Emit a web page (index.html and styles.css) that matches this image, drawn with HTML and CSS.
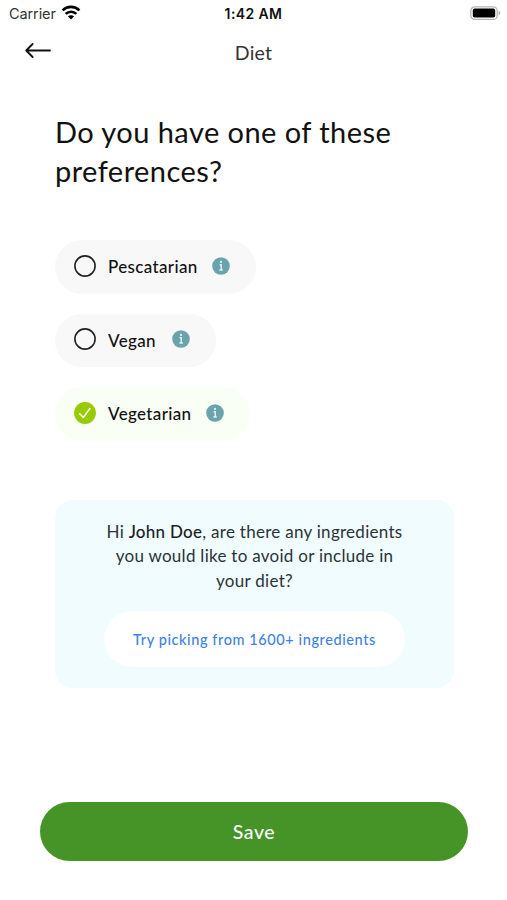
FILE: index.html
```html
<!DOCTYPE html>
<html lang="en">
<head>
<meta charset="utf-8">
<title>Diet</title>
<link rel="stylesheet" href="styles.css">
</head>
<body>
<div class="status">
  <div class="carrier"><span>Carrier</span>
    <svg width="20" height="15" viewBox="0 0 20 15" fill="none" stroke="#000" stroke-width="2.7"><path d="M1.6 5.4C6.3.7 13.7.7 18.4 5.4M4.7 8.9c3-2.9 7.6-2.9 10.6 0"/><path d="M10 14.4l-3.1-3.1c1.7-1.5 4.5-1.5 6.2 0z" fill="#000" stroke="none"/></svg>
  </div>
  <div class="clock">1:42 AM</div>
  <div class="battery">
    <svg width="31" height="15" viewBox="0 0 31 15"><rect x=".8" y=".8" width="26.4" height="12.6" rx="4" fill="#fff" stroke="#b5b5b5" stroke-width="1.3"/><rect x="2.8" y="2.6" width="22.4" height="9" rx="1.8"/><path d="M28.6 4.8c2 .8 2 3.8 0 4.6z" fill="#aaa"/></svg>
  </div>
</div>
<header class="nav">
  <svg width="28" height="18" viewBox="0 0 28 18" fill="none" stroke="#111" stroke-width="1.8" stroke-linecap="round" stroke-linejoin="round"><path d="M26 8.5H2.2M8.6 2L2.2 8.5l6.4 6.5"/></svg>
  <h2>Diet</h2>
</header>
<main>
  <h1>Do you have one of these<br>preferences?</h1>
  <div class="options">
    <div class="option pescatarian">
      <svg width="22" height="22" viewBox="0 0 22 22"><circle cx="11" cy="11" r="10.1" fill="none" stroke="#222" stroke-width="1.6"/></svg>
      <span>Pescatarian</span>
      <svg class="info" width="18" height="18" viewBox="0 0 18 18"><circle cx="9" cy="9" r="8.8" fill="#6ba3ac"/><path d="M7.6 7.7h1.6v5M7.4 13h3.4" fill="none" stroke="#e4f2f3" stroke-width="1.4"/><circle cx="9" cy="4.9" r="1.1" fill="#e4f2f3"/></svg>
    </div>
    <div class="option vegan">
      <svg width="22" height="22" viewBox="0 0 22 22"><circle cx="11" cy="11" r="10.1" fill="none" stroke="#222" stroke-width="1.6"/></svg>
      <span>Vegan</span>
      <svg class="info" width="18" height="18" viewBox="0 0 18 18"><circle cx="9" cy="9" r="8.8" fill="#6ba3ac"/><path d="M7.6 7.7h1.6v5M7.4 13h3.4" fill="none" stroke="#e4f2f3" stroke-width="1.4"/><circle cx="9" cy="4.9" r="1.1" fill="#e4f2f3"/></svg>
    </div>
    <div class="option vegetarian">
      <svg width="22" height="22" viewBox="0 0 22 22"><circle cx="11" cy="11" r="10.9" fill="#97cb00"/><path d="M5.7 11.7l3.6 3.8 6.6-9" fill="none" stroke="#fff" stroke-width="1.5" stroke-linecap="round" stroke-linejoin="round"/></svg>
      <span>Vegetarian</span>
      <svg class="info" width="18" height="18" viewBox="0 0 18 18"><circle cx="9" cy="9" r="8.8" fill="#6ba3ac"/><path d="M7.6 7.7h1.6v5M7.4 13h3.4" fill="none" stroke="#e4f2f3" stroke-width="1.4"/><circle cx="9" cy="4.9" r="1.1" fill="#e4f2f3"/></svg>
    </div>
  </div>
  <section class="card">
    <p>Hi <b>John Doe</b>, are there any ingredients<br>you would like to avoid or include in<br>your diet?</p>
    <button class="pick">Try picking from 1600+ ingredients</button>
  </section>
</main>
<button class="save">Save</button>
</body>
</html>
```

FILE: styles.css
```css
* { box-sizing: border-box; }
body {
  margin: 0;
  height: 900px;
  background: #fff;
  color: #111;
  font-family: Lato, "Liberation Sans", sans-serif;
  overflow: hidden;
}
.status {
  display: grid;
  grid-template-columns: 1fr 100px 1fr;
  align-items: center;
  height: 27px;
  padding: 0 6px 0 9px;
  font: 14.5px Inter, sans-serif;
}
.carrier { display: flex; align-items: center; gap: 5px; color: #333; letter-spacing: -0.1px; }
.carrier svg { margin-top: -2px; }
.clock { margin-left: -3px; text-align: center; font-size: 14px; font-weight: 600; letter-spacing: 0.4px; }
.battery { display: flex; justify-content: flex-end; }
.nav {
  display: grid;
  grid-template-columns: 80px 1fr 80px;
  height: 51px;
}
.nav svg { margin: 15px 0 0 24px; }
.nav h2 {
  margin: 0;
  text-align: center;
  font-size: 19.5px;
  line-height: 52px;
  font-weight: 400;
  letter-spacing: 0.2px;
  color: #333;
}
main { padding: 34px 53px 0 55px; }
h1 {
  margin: 0;
  font-size: 29px;
  line-height: 39px;
  font-weight: 400;
  letter-spacing: 0.45px;
  white-space: nowrap;
}
.options { display: flex; flex-direction: column; align-items: flex-start; gap: 20px; margin-top: 50px; }
.option {
  display: flex;
  align-items: center;
  height: 53.5px;
  padding: 0 26.5px 2px 19px;
  border-radius: 27px;
  background: #f8f8f8;
  color: #111;
  font-size: 17px;
  font-weight: 500;
  letter-spacing: 0.35px;
}
.option span { margin: 2px auto 0 12px; }
.pescatarian { width: 201px; }
.vegan { width: 161px; }
.vegetarian { width: 195px; background: #f9fff5; }
.card {
  display: flex;
  flex-direction: column;
  align-items: center;
  height: 188px;
  margin-top: 59px;
  padding-top: 20px;
  border-radius: 18px;
  background: #f0fcff;
}
.card p {
  margin: 0;
  text-align: center;
  font-size: 17px;
  line-height: 24.5px;
  letter-spacing: 0.28px;
  white-space: nowrap;
  color: #2b3336;
}
.card b { font-weight: 500; color: #1b2225; }
button { display: block; border: 0; padding: 0; font-family: inherit; }
.pick {
  width: 301px;
  height: 56px;
  margin-top: 18px;
  border-radius: 28px;
  background: #fff;
  color: #3e82e2;
  font-size: 14.5px;
  font-weight: 500;
  letter-spacing: 0.59px;
}
.save {
  width: 428px;
  height: 59px;
  margin: 114px 0 0 40px;
  border-radius: 30px;
  background: #469428;
  color: #fff;
  font-size: 19.5px;
  font-weight: 500;
  letter-spacing: 0.6px;
}
```
